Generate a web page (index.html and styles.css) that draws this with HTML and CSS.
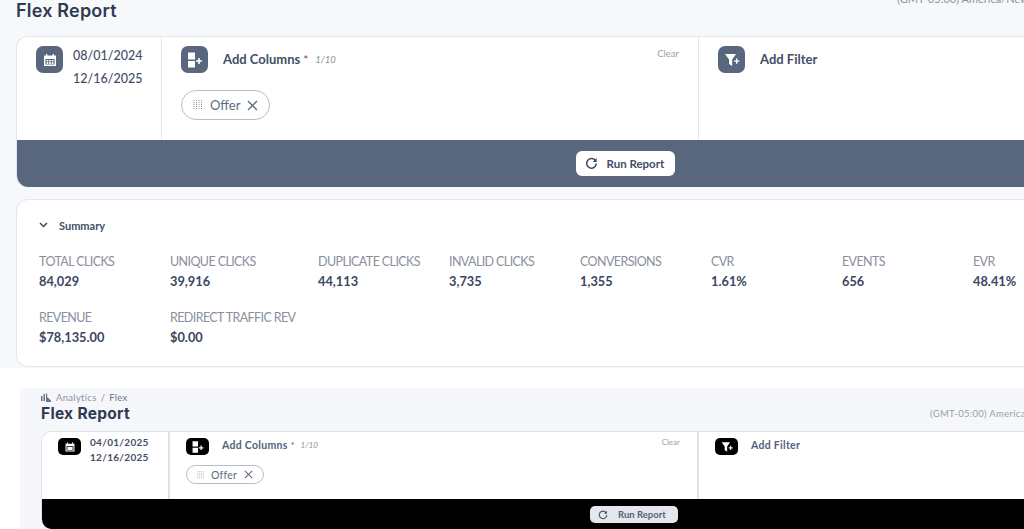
FILE: index.html
```html
<!DOCTYPE html>
<html lang="en">
<head>
    <meta charset="UTF-8">
    <title>Flex Report</title>
    <link rel="stylesheet" href="styles.css">
</head>
<body>
    <div class="page">
        <div class="head">
            <h1>Flex Report</h1>
            <span class="timezone">(GMT-05:00) America/New_York</span>
        </div>

        <div class="card builder">
            <div class="builder-cols">
                <div class="col col-date">
                    <span class="tile">
                        <svg width="16" height="16" viewBox="0 0 16 16"><path fill="#fff" d="M2 3.500h2V2h1.400v1.500h5.200V2H12v1.500h2V14H2zM3.400 7v5.600h9.200V7z"/><path fill="#fff" d="M4.500 8h1.800v1.600H4.500zM7.100 8h1.800v1.600H7.100zM9.700 8h1.800v1.600H9.700zM4.500 10.300h1.800v1.600H4.500zM7.100 10.300h1.800v1.600H7.100zM9.700 10.300h1.800v1.600H9.700z"/></svg>
                    </span>
                    <div class="dates">
                        <div>08/01/2024</div>
                        <div>12/16/2025</div>
                    </div>
                </div>
                <div class="col col-columns">
                    <div class="col-title">
                        <span class="tile">
                            <svg width="18" height="18" viewBox="0 0 18 18"><path fill="#fff" d="M2 1.500h7v7H2zM2 10h7v6.500H2zM12.200 7h1.600v2.200H16v1.600h-2.200V13h-1.600v-2.200H10V9.200h2.200z"/></svg>
                        </span>
                        <span class="col-name">Add Columns</span>
                        <span class="req">*</span>
                        <span class="count">1/10</span>
                        <span class="clear">Clear</span>
                    </div>
                    <span class="chip">
                        <svg class="grip" width="9" height="10" viewBox="0 0 9 10"><path stroke="#8b93a3" stroke-width="1" stroke-dasharray="1 1" d="M1 0v10M3.500 0v10M6 0v10M8.500 0v10"/></svg>
                        Offer
                        <svg class="chip-x" width="11" height="11" viewBox="0 0 11 11"><path stroke="#5e6a7e" stroke-width="1.300" fill="none" d="M1 1l9 9M10 1l-9 9"/></svg>
                    </span>
                </div>
                <div class="col col-filter">
                    <div class="col-title">
                        <span class="tile">
                            <svg width="18" height="18" viewBox="0 0 18 18"><path fill="#fff" d="M2 3h11L9.200 8.500V15L6 13V8.500z"/><path fill="#fff" d="M13 7.500h1.400v1.900h1.900v1.400h-1.900v1.900H13v-1.900h-1.900V9.400H13z"/></svg>
                        </span>
                        <span class="col-name">Add Filter</span>
                    </div>
                </div>
            </div>
            <div class="run-bar">
                <button class="run-btn">
                    <svg width="13" height="13" viewBox="0 0 14 14"><path fill="none" stroke="#3b4658" stroke-width="1.600" d="M11.500 4.200A5.200 5.200 0 1 0 12.200 7"/><path fill="#3b4658" d="M12.600 1v4.300H8.400z"/></svg>
                    Run Report
                </button>
            </div>
        </div>

        <div class="card summary">
            <div class="summary-title">
                <svg width="9" height="6" viewBox="0 0 9 6"><path fill="none" stroke="#3f4a60" stroke-width="1.500" d="M1 1l3.500 3.500L8 1"/></svg>
                Summary
            </div>
            <div class="stats">
                <div class="stat"><div class="stat-label">TOTAL CLICKS</div><div class="stat-value">84,029</div></div>
                <div class="stat"><div class="stat-label">UNIQUE CLICKS</div><div class="stat-value">39,916</div></div>
                <div class="stat"><div class="stat-label">DUPLICATE CLICKS</div><div class="stat-value">44,113</div></div>
                <div class="stat"><div class="stat-label">INVALID CLICKS</div><div class="stat-value">3,735</div></div>
                <div class="stat"><div class="stat-label">CONVERSIONS</div><div class="stat-value">1,355</div></div>
                <div class="stat"><div class="stat-label">CVR</div><div class="stat-value">1.61%</div></div>
                <div class="stat"><div class="stat-label">EVENTS</div><div class="stat-value">656</div></div>
                <div class="stat"><div class="stat-label">EVR</div><div class="stat-value">48.41%</div></div>
                <div class="stat"><div class="stat-label">REVENUE</div><div class="stat-value">$78,135.00</div></div>
                <div class="stat stat-wide"><div class="stat-label">REDIRECT TRAFFIC REV</div><div class="stat-value">$0.00</div></div>
            </div>
        </div>
    </div>

    <div class="page-small">
        <div class="crumbs">
            <svg width="11" height="9" viewBox="0 0 11 9"><path fill="#6d7687" d="M0 3h1.500v5H0zM2.500 1H4v7H2.500zM5 0l1.200 1v3L10 7.500V9H5z"/></svg>
            Analytics <span class="crumb-sep">/</span> <span class="crumb-now">Flex</span>
        </div>
        <div class="head-small">
            <h2>Flex Report</h2>
            <span class="timezone-small">(GMT-05:00) America/New_York</span>
        </div>
        <div class="card-small">
            <div class="small-cols">
                <div class="col-small col-small-date">
                    <span class="tile-small">
                        <svg width="12" height="12" viewBox="0 0 16 16"><path fill="#fff" d="M2 3.500h2V2h1.400v1.500h5.200V2H12v1.500h2V14H2zM3.400 7v5.600h9.200V7z"/><path fill="#fff" d="M4.500 8h7v4h-7z"/></svg>
                    </span>
                    <div class="dates-small">
                        <div>04/01/2025</div>
                        <div>12/16/2025</div>
                    </div>
                </div>
                <div class="col-small col-small-columns">
                    <div class="title-small">
                        <span class="tile-small">
                            <svg width="14" height="14" viewBox="0 0 18 18"><path fill="#fff" d="M2 1.500h7v7H2zM2 10h7v6.500H2zM12.200 7h1.600v2.200H16v1.600h-2.200V13h-1.600v-2.200H10V9.200h2.200z"/></svg>
                        </span>
                        <span class="name-small">Add Columns</span>
                        <span class="req-small">*</span>
                        <span class="count-small">1/10</span>
                        <span class="clear-small">Clear</span>
                    </div>
                    <span class="chip-small">
                        <svg class="grip" width="7" height="8" viewBox="0 0 9 10"><path stroke="#9aa1ae" stroke-width="1" stroke-dasharray="1 1" d="M1 0v10M3.500 0v10M6 0v10M8.500 0v10"/></svg>
                        Offer
                        <svg width="9" height="9" viewBox="0 0 11 11"><path stroke="#5e6a7e" stroke-width="1.300" fill="none" d="M1 1l9 9M10 1l-9 9"/></svg>
                    </span>
                </div>
                <div class="col-small col-small-filter">
                    <div class="title-small">
                        <span class="tile-small">
                            <svg width="14" height="14" viewBox="0 0 18 18"><path fill="#fff" d="M2 3h11L9.200 8.500V15L6 13V8.500z"/><path fill="#fff" d="M13 7.500h1.400v1.900h1.900v1.400h-1.900v1.900H13v-1.900h-1.900V9.400H13z"/></svg>
                        </span>
                        <span class="name-small">Add Filter</span>
                    </div>
                </div>
            </div>
            <div class="run-bar-small">
                <button class="run-btn-small">
                    <svg width="10" height="10" viewBox="0 0 14 14"><path fill="none" stroke="#4a5568" stroke-width="1.600" d="M11.500 4.200A5.200 5.200 0 1 0 12.200 7"/><path fill="#4a5568" d="M12.600 1v4.300H8.400z"/></svg>
                    Run Report
                </button>
            </div>
        </div>
    </div>
</body>
</html>
```

FILE: styles.css
```css
* {
    margin: 0;
    padding: 0;
    box-sizing: border-box;
}

html, body {
    width: 1024px;
    height: 529px;
    overflow: hidden;
}

body {
    font-family: "Lato", "Liberation Sans", sans-serif;
    background-color: #fff;
    color: #3b4660;
}

/* top screen */
.page {
    width: 1300px;
    height: 368px;
    padding-left: 16px;
    background-color: #f7f8fb;
}

.head {
    display: flex;
    justify-content: space-between;
    height: 36px;
}

.head h1 {
    font-family: "Inter", "Liberation Sans", sans-serif;
    font-size: 18px;
    font-weight: 600;
    line-height: 21px;
    letter-spacing: 0.200px;
    color: #2f3a52;
}

.timezone {
    width: 403px;
    margin-top: -8px;
    font-size: 11px;
    line-height: 14px;
    color: #8d93a0;
}

.card {
    background: #fff;
    border: 1px solid #e4e6ea;
    border-radius: 12px;
}

.builder {
    height: 151px;
    overflow: hidden;
    border-bottom: 0;
}

.builder-cols {
    display: flex;
    height: 103px;
}

.col {
    padding-top: 9px;
    border-right: 1px solid #e4e6ea;
}

.col-date {
    display: flex;
    width: 145px;
    padding-left: 19px;
    gap: 10px;
}

.col-columns {
    width: 537px;
    padding-left: 19px;
    padding-right: 19px;
}

.col-filter {
    flex: 1;
    border-right: 0;
    padding-left: 19px;
}

.tile {
    display: flex;
    align-items: center;
    justify-content: center;
    flex: none;
    width: 27px;
    height: 27px;
    border-radius: 7px;
    background-color: #58667e;
}

.dates {
    font-size: 12.500px;
    font-weight: 500;
    line-height: 23px;
    margin-top: -2px;
    text-align: right;
    color: #434e66;
}

.col-title {
    display: flex;
    align-items: center;
}

.col-name {
    margin-left: 15px;
    padding-bottom: 2px;
    font-size: 13px;
    font-weight: 700;
    color: #434e66;
}

.req {
    margin-left: 3px;
    font-size: 12px;
    color: #8a4a5a;
}

.count {
    margin-left: 7px;
    font-size: 9.500px;
    font-style: italic;
    color: #8d93a0;
}

.clear {
    margin-left: auto;
    margin-top: -12px;
    font-size: 9.500px;
    color: #9a9fab;
}

.chip {
    display: inline-flex;
    align-items: center;
    height: 30px;
    margin-top: 17px;
    padding: 0 11px;
    border: 1px solid #b9bdc6;
    border-radius: 15px;
    font-size: 13px;
    color: #5e6a7e;
}

.chip .grip {
    margin-right: 8px;
}

.chip-x {
    margin-left: 7px;
}

.run-bar {
    display: flex;
    justify-content: center;
    align-items: center;
    height: 48px;
    background-color: #58667e;
}

.run-btn {
    display: flex;
    align-items: center;
    gap: 9px;
    width: 99px;
    height: 25px;
    margin-left: -66px;
    margin-bottom: 2px;
    padding-left: 9px;
    border: none;
    border-radius: 6px;
    background: #fff;
    font-family: inherit;
    font-size: 11.500px;
    font-weight: 700;
    color: #434e66;
}

.summary {
    height: 168px;
    margin-top: 12px;
    padding: 17px 22px 0;
}

.summary-title {
    display: flex;
    align-items: center;
    gap: 11px;
    height: 16px;
    font-size: 11px;
    font-weight: 700;
    color: #434e66;
}

.stats {
    display: grid;
    grid-template-columns: 131px 148px repeat(6, 131px);
    row-gap: 18px;
    margin-top: 20px;
}

.stat-label {
    font-size: 12.500px;
    line-height: 18px;
    letter-spacing: -0.600px;
    color: #8a8f9c;
}

.stat-value {
    font-size: 12.800px;
    font-weight: 700;
    line-height: 20px;
    color: #3b4660;
}

.stat-wide {
    grid-column: span 2;
}

/* lower screen */
.page-small {
    width: 1300px;
    height: 141px;
    margin-top: 20px;
    margin-left: 20px;
    padding: 4px 0 0 21px;
    background-color: #f6f7fa;
}

.crumbs {
    display: flex;
    align-items: center;
    gap: 4px;
    height: 11px;
    font-size: 9.500px;
    letter-spacing: 0.300px;
    color: #8d93a0;
}

.crumb-now {
    color: #6d7687;
}

.head-small {
    display: flex;
    justify-content: space-between;
    height: 28px;
    padding-top: 2px;
}

.head-small h2 {
    font-family: "Inter", "Liberation Sans", sans-serif;
    font-size: 15.500px;
    font-weight: 700;
    line-height: 18px;
    letter-spacing: 0.300px;
    color: #2f3a52;
}

.timezone-small {
    width: 390px;
    font-size: 9.500px;
    line-height: 18px;
    letter-spacing: 0.300px;
    color: #9a9fab;
}

.card-small {
    background: #fff;
    border: 1px solid #e1e3e8;
    border-bottom: 0;
    border-radius: 10px;
    overflow: hidden;
    height: 98px;
}

.small-cols {
    display: flex;
    height: 67px;
}

.col-small {
    padding-top: 6px;
    border-right: 2px solid #dfe1e6;
}

.col-small-date {
    display: flex;
    width: 128px;
    padding-left: 16px;
    gap: 9px;
}

.col-small-columns {
    width: 529px;
    padding-left: 16px;
    padding-right: 17px;
}

.col-small-filter {
    flex: 1;
    border-right: 0;
    padding-left: 16px;
}

.tile-small {
    display: flex;
    align-items: center;
    justify-content: center;
    flex: none;
    width: 23px;
    height: 17px;
    border-radius: 5px;
    background-color: #000;
}

.dates-small {
    font-size: 10px;
    font-weight: 700;
    line-height: 15px;
    letter-spacing: 0.300px;
    margin-top: -3px;
    text-align: right;
    color: #434e66;
}

.title-small {
    display: flex;
    align-items: center;
}

.name-small {
    margin-left: 13px;
    padding-bottom: 3px;
    font-size: 10.500px;
    font-weight: 700;
    letter-spacing: 0.300px;
    color: #56617a;
}

.req-small {
    margin-left: 3px;
    padding-bottom: 3px;
    font-size: 9px;
    color: #8a4a5a;
}

.count-small {
    margin-left: 6px;
    padding-bottom: 3px;
    font-size: 8px;
    font-style: italic;
    color: #8d93a0;
}

.clear-small {
    margin-left: auto;
    margin-top: -9px;
    font-size: 8px;
    color: #9a9fab;
}

.chip-small {
    display: inline-flex;
    align-items: center;
    gap: 7px;
    height: 19px;
    margin-top: 10px;
    padding: 0 10px;
    border: 1px solid #b9bdc6;
    border-radius: 10px;
    font-size: 10.500px;
    letter-spacing: 0.200px;
    color: #5e6a7e;
}

.run-bar-small {
    display: flex;
    justify-content: center;
    height: 31px;
    padding-top: 7px;
    background-color: #000;
}

.run-btn-small {
    display: flex;
    align-items: center;
    gap: 10px;
    width: 88px;
    height: 17px;
    margin-left: -93px;
    padding-left: 8px;
    border: none;
    border-radius: 5px;
    background: #e4e7ec;
    font-family: inherit;
    font-size: 9.500px;
    font-weight: 700;
    color: #56617a;
}
```
